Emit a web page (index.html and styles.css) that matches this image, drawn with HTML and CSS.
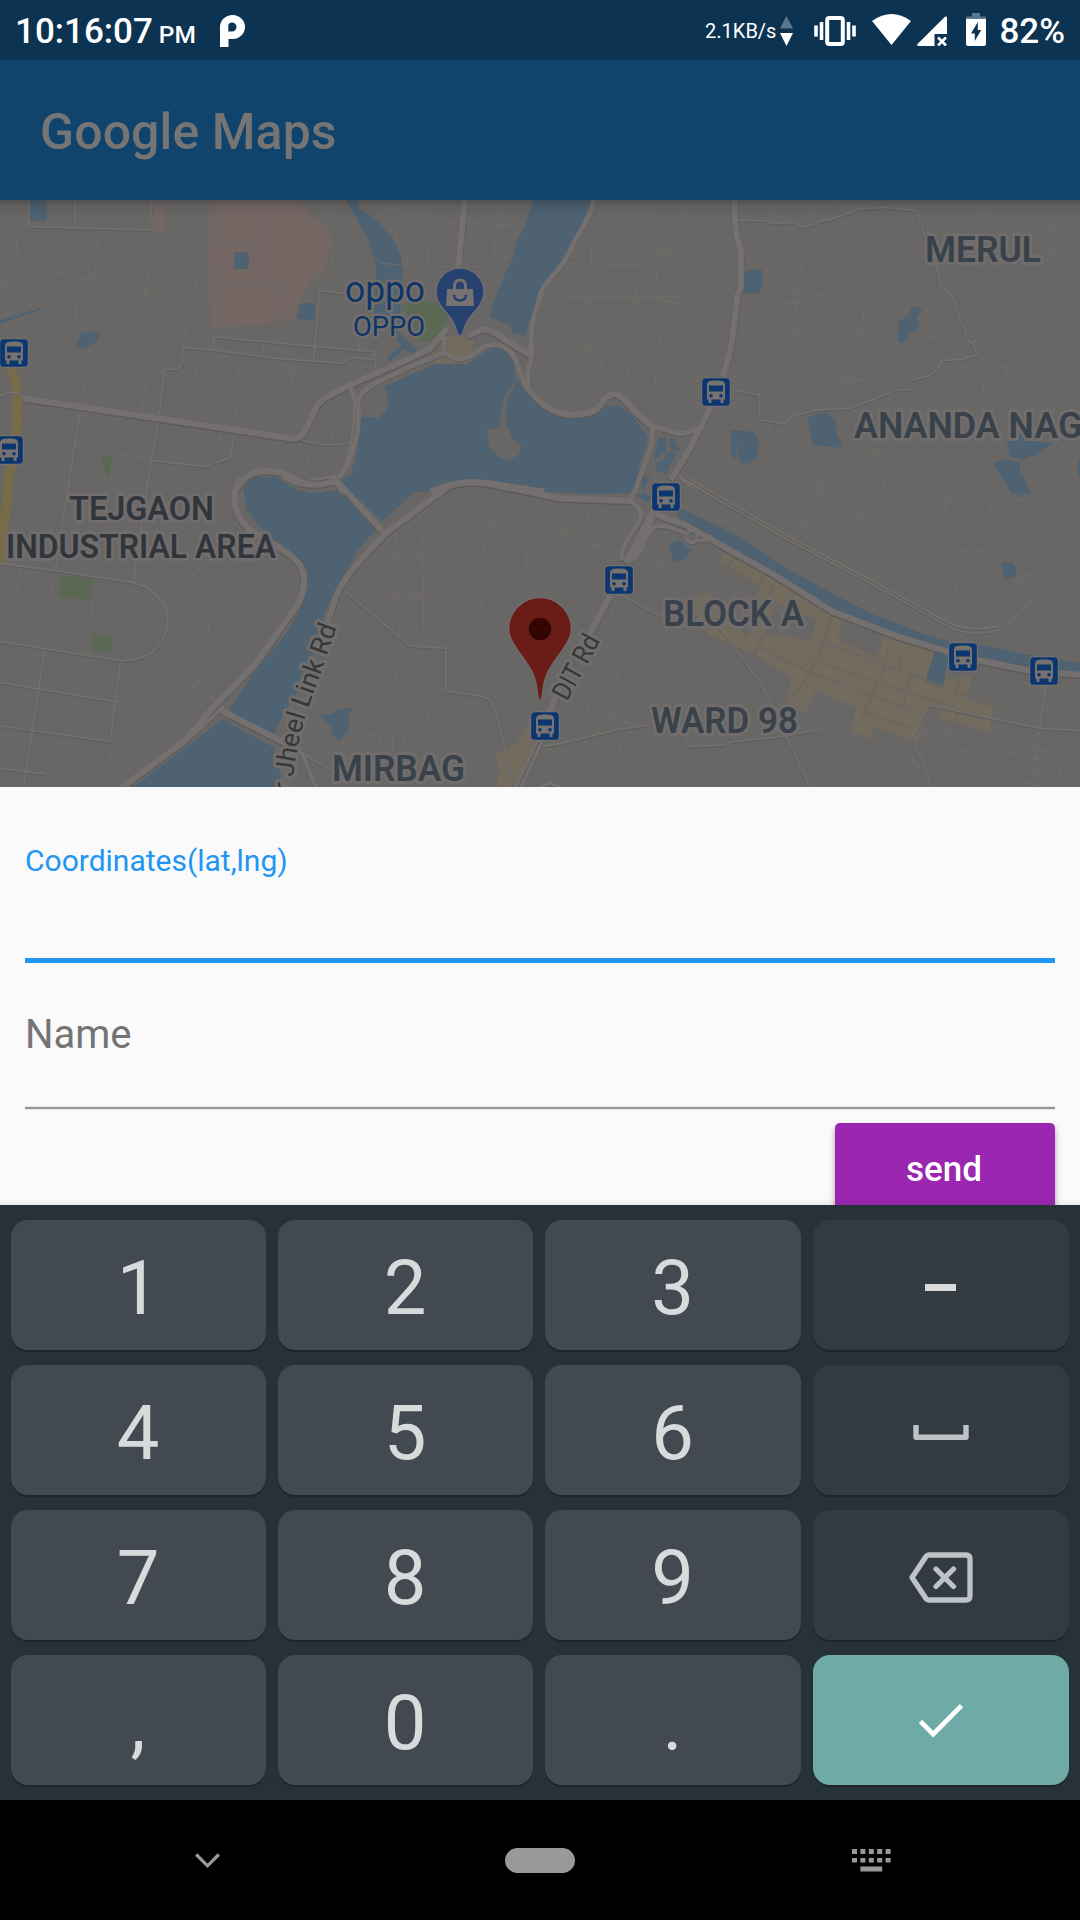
FILE: index.html
```html
<!DOCTYPE html>
<html lang="en">
<head>
<meta charset="utf-8">
<title>Google Maps</title>
<link rel="stylesheet" href="styles.css">
</head>
<body>
<div class="screen">
  <header class="status">
    <span class="clock">10:16:07</span><span class="ampm">PM</span>
    <svg class="i-p" width="25" height="32" viewBox="0 0 25 32"><path fill="#fff" fill-rule="evenodd" d="M0 32V12A12.5 12 0 1 1 12.500 24H8.500V32ZM12 7.500C9.500 7.500 8.300 9 8.300 11V16.500H12A4.500 4.500 0 0 0 12 7.500Z"/></svg>
    <span class="rate">2.1KB/s</span>
    <svg class="i-arrows" width="13" height="32" viewBox="0 0 13 32"><path fill="#5b768b" d="M6.500 1L13 13.500H0Z"/><path fill="#fff" d="M0 18H13L6.500 31Z"/></svg>
    <svg class="i-vib" width="42" height="30" viewBox="0 0 42 30"><rect x="13.200" y="2" width="15.600" height="26" rx="2" fill="none" stroke="#fff" stroke-width="4"/><path stroke="#fff" stroke-width="3.600" d="M7.500 6V24M34.500 6V24M2 9.500V20.500M40 9.500V20.500"/></svg>
    <svg class="i-wifi" width="39" height="31" viewBox="0 0 39 31"><path fill="#fff" d="M0 7Q19.500-7 39 7L19.500 31Z"/></svg>
    <svg class="i-sig" width="30" height="30" viewBox="0 0 30 30"><path fill="#fff" d="M30 1.500V18H17.500V30H1.500Q-.5 29.500.5 28L28 .8Q29.700-.2 30 1.500Z"/><path stroke="#fff" stroke-width="2.600" d="M21 21.500L29 29.500M29 21.500L21 29.500"/></svg>
    <svg class="i-bat" width="20" height="33" viewBox="0 0 20 33"><path fill="#5b768b" d="M6 0H14V3.500H20V6H0V3.500H6Z"/><path fill="#fff" fill-rule="evenodd" d="M0 6H20V31Q20 33 18 33H2Q0 33 0 31ZM11.800 9L5 20.500H8.800V28L15.200 17H11.800Z"/></svg>
    <span class="pct">82%</span>
  </header>
  <div class="appbar"><h1>Google Maps</h1></div>

  <main class="map">
    <svg width="1080" height="588" viewBox="0 0 1080 588">
      <defs>
        <g id="arterials">
          <g transform="translate(0,-10) scale(.34444,.33333)">
            <path d="M1352 0L1330 235M65 625L230 650 450 684 850 746C870 746 878 738 886 722L920 648C930 632 940 625 960 615L1020 583 1180 510 1245 478 1300 415M1355 437C1385 430 1390 418 1412 418 1440 425 1470 455 1505 474L1545 498"/>
            <path stroke-width="14" d="M1290 440L1288 490 1332 508C1380 505 1390 465 1430 465 1500 460 1500 540 1530 595L1580 650M1545 498C1535 400 1555 360 1575 310M1288 490L1190 530 1090 580C1060 598 1038 615 1040 650 1045 740 1025 800 985 865M1018 590L1033 645M1545 498L1532 540V600M1534 470L1545 498"/>
            <path d="M680 910C695 875 720 845 770 843 830 840 850 870 885 880 920 890 950 880 975 873L1000 910M1250 905C1330 870 1380 875 1420 880L1580 905"/>
            <path stroke-width="8" d="M985 865C1015 815 1025 750 1030 645M980 860C955 860 930 870 900 868"/>
          </g>
          <g transform="translate(540,-10) scale(.34444,.33333)">
            <path d="M562 0L568 125 583 185V295L573 315C560 440 555 490 531 560M495 650C470 710 430 790 380 870"/>
            <path d="M-5 630C35 665 60 674 100 674 180 672 175 635 195 620 215 605 230 615 245 630 275 665 300 690 325 710"/>
            <path stroke-width="14" d="M160 0C155 80 120 110 95 165 60 260 0 270-5 340M325 710C370 718 390 730 410 731 430 728 440 722 460 718M325 710C335 780 290 840 275 910"/>
          </g>
          <g transform="translate(0,280) scale(.34444,.33333)">
            <path d="M700-5C665 50 680 100 720 145 760 180 820 200 858 240 890 270 888 310 870 365L740 555 620 680 540 780 345 930"/>
            <path d="M1580 45L1420 12C1360 0 1310 10 1290 28L1120 160C1040 240 990 310 975 350L950 430M975 0L1115 160M640 690L875 815"/>
            <path stroke-width="10" d="M875 815L920 930M820-10C860 20 900 25 965 5M650 680L560 765"/>
          </g>
          <g transform="translate(540,280) scale(.34444,.33333)">
            <path d="M-5 42L50 55 262 63M205 345L140 470M60 620L20 710M250 250L330 90M330 100L420 135 500 180 680 285 850 395 1040 470 1190 517M1270 540L1420 572 1580 585"/>
            <path stroke-width="8" d="M-6 780L-72 925M8 780L-56 925"/>
            <path stroke-width="12" d="M262 63C300 90 298 110 285 130 240 200 230 215 240 240M262 63L290-5M420 160C330 115 315 145 300 195 285 235 275 240 255 245M270 235C290 180 325 140 330 100"/>
            <ellipse cx="440" cy="170" rx="16" ry="18" stroke-width="9"/><path stroke-width="9" d="M455 160L500 170M455 182L490 180M-5 925L30 910 70 925"/>
          </g>
        </g>
        <g id="streets">
          <g transform="translate(0,-10) scale(.34444,.33333)">
            <path d="M83 0V110L435 120 442 0M218 0V110M0 618L25 608 55 610M235 655L195 905M460 690L425 905M462 675L478 535 515 540 530 520V472L620 480V440L915 470 1085 485 1092 540M620 480L800 505 995 520 1018 503 1085 508M910 515L928 302 1000 310M1045 480V455M440 812L600 830 668 802 680 735M875 750C920 765 970 768 1010 760"/>
          </g>
          <g transform="translate(540,-10) scale(.34444,.33333)">
            <path d="M568 90L655 92 672 100 745 97 755 112C790 112 810 90 848 87L930 57 1000 52 1093 62 1120 145 1150 230 1165 290 1195 315 1245 455 1255 460 1270 495 1225 508 1165 512 1155 540 1120 560 1070 572V600H1040L900 655 800 660 727 680 715 702 638 690V615L560 600M400 855L480 905M410 870L455 905"/>
          </g>
          <g transform="translate(0,280) scale(.34444,.33333)">
            <path d="M202 0L160 272M430 0L387 305M0 250L160 272 387 308C440 320 487 370 487 420 487 490 440 545 350 542L0 485M130 510L68 925M350 545L320 785 0 738M332 665L0 608M1002 335L1190 498 1295 505V630C1350 650 1410 640 1425 665 1450 710 1460 800 1490 890M885 825L960 870M0 865L130 882"/>
          </g>
          <g transform="translate(540,280) scale(.34444,.33333)">
            <path d="M400-10L730 185 960 310 1170 430C1220 465 1280 465 1330 450M430-5L740 180 970 305 1180 425C1230 450 1280 450 1330 440M520 440L640 610 710 760 785 925M0 800C100 790 180 750 300 738H325M425 765V800L530 795 560 785 715 768 800 750M1130 925C1130 870 1090 820 1085 770L1128 675 1300 712 1450 745 1568 752M1470 620L1450 745M235 345L360 415"/>
          </g>
        </g>
        <g id="lanes">
          <g transform="translate(0,-10) scale(.34444,.33333)">
            <path d="M0 65L20 100 45 105 50 205M0 207L115 200 160 197 220 235 275 250M0 280L60 250 115 240 190 252 235 270 275 255 285 118M115 205V245L170 400M185 210L172 245M225 270L220 390M258 265L240 280 238 385M275 250L280 310 400 372 500 415V440M385 395L375 440 350 490 300 540 250 540 235 650M320 433L405 495V520M350 485L400 580M400 372L430 270 428 240 485 215 560 230 572 300M425 180L440 125 555 135M468 135V240M515 135L520 175M365 270H400L435 250M425 285V335L485 332 470 310H425M0 290C30 270 90 280 110 330L70 355 0 375M0 410L65 405 100 520 0 560M505 430L525 355 540 350M538 410L530 490M578 430L568 575M440 560L470 545M425 555L412 670M800 450L805 420 870 415M765 455V490M700 495L680 720M680 540L880 555M855 510L840 650M735 560L730 540M770 590L850 597M905 515V575M930 565L960 565 980 535M65 740L280 785 520 820M280 785L265 840M415 800L340 790M590 715L580 750M640 725V750M580 830L585 850 565 890M620 830L650 880M680 790L780 803M900 765L890 840 850 820M970 680L955 830M980 640V670M875 710L905 680M1105 30V55L1250 65 1240 230 1105 220M1125 115H1155L1150 155H1240M1188 180L1180 230M1055 50L1105 55M1245 95L1500 105 1503 75M1450 30L1435 200 1430 235M1430 195L1480 205M1240 230L1430 230M915 30C950 90 1030 130 1050 220V270M965 195L1040 165M965 195C970 300 960 280 980 330M935 80L975 55"/>
            <path d="M630 30L635 370 655 390M750 30L745 285M635 165H745M635 288L810 285 835 375 805 395" stroke="#6f6b6a"/>
          </g>
          <g transform="translate(540,-10) scale(.34444,.33333)">
            <path d="M180 30V155L190 190 240 160 225 135 265 125 385 145 375 210 255 225 75 220M180 80L255 65 330 70V30M328 70V125M345 140L340 210M310 150L305 190 430 190M430 30L400 115M455 135L500 140 505 180 570 190M255 225L575 265M90 272L150 275M150 170L142 490M0 300L70 320 410 320M280 280L275 380M340 225L335 325 420 345M470 295L570 305M145 348L320 355C370 450 340 450 335 550V600M320 370L270 490 240 600M0 490L70 470 170 470 180 550 120 585M175 500L330 550M0 515L180 625M0 600L15 615M250 590L380 605 460 620M165 350V420L195 425 230 465M400 437H495V495L540 505M380 520L375 615M410 545H445V610M500 30L508 70M630 140L637 200M590 207H700L1050 250 1045 290 1085 250M590 230L1040 280M700 265L1015 305M660 297L1040 345M580 320L990 370M575 345L980 400M570 380L960 430M570 410L945 460M565 445L880 515M565 475L940 575M615 515L910 575M660 548L860 605M560 557L850 635M760 210L715 620M990 210L980 370M940 360L935 460M880 515L875 575M720 335V400M800 350L795 405M880 490H930L950 520 985 530M880 580L950 570M680 50V95M895 70V130M780 75L835 35M945 55V95M860 35L930 60M1165 45L1110 55M1255 90L1290 65 1275 30M1290 65L1340 105 1445 155 1480 180 1568 265M1445 155L1490 105 1530 135M1340 215L1360 300 1400 370M1490 110L1480 140 1505 170 1470 190M1380 240L1420 290M1490 240L1495 270 1530 290V320M1105 440H1160M1125 325L1185 300M1130 355L1200 340M1230 385L1320 380 1330 345M1250 455L1330 456M1280 500L1290 540 1280 730M1290 540L1345 530 1435 505 1440 550M1390 525L1440 620 1510 630M1360 520L1350 570M1030 510V530L1090 525 1125 435M1170 440V510M945 525L955 575M1010 615L1020 665 1050 650M1080 565V640M1170 515L1195 560M500 685H540M445 790L495 815 490 850M665 700V815L610 865M610 865L540 830 530 800M715 700L780 785 820 820 815 900M880 790L985 785 1130 790 1220 730M1130 790L1165 850 1230 880M1030 690L1025 855 970 780 925 810M1110 850L1210 900M1490 630V740L1530 780 1520 870 1440 850M1530 780L1568 770M995 850L1000 905"/>
          </g>
          <g transform="translate(0,280) scale(.34444,.33333)">
            <path d="M0 380L40 385 60 265M55 290L150 300V350H125M0 420L40 424M210 420L225 410 268 415 345 432M268 360L355 382M268 360V415M405 395L385 540M425 310C440 270 450 260 460 230M470 355L565 280 640 215M520 240C560 270 605 350 605 420V470L625 490 730 455 755 420 735 395M490 325L470 350M480 375L490 400M465 500L540 560 620 660M490 570L530 620 570 605 740 540M735 490L750 440M660 275L720 290 740 325 830 285 860 265M770 310L830 360M800 290L820 320M365 665L395 720 530 670 570 605M335 665H430L500 620M425 720L455 825M390 780L425 855M325 690L360 700 365 725M325 785V800L315 920M180 890V925M235 905L290 908M600 0L565 30M640 95L700 150M665 120L650 95 680 70M700 30L710 60M1085 230L1250 237M1065 345H1270M1130 165L1065 340M1150 150L1160 490M1190 115V460M1228 130L1230 500M1270 345L1265 400 1305 420M1250 70L1300 95 1315 60 1340 80M1380 20L1390 70 1420 130 1400 230M1450 40L1420 130 1470 130 1475 90 1540 95 1535 145 1480 140M1290 165L1320 135 1365 130M1290 165L1310 200 1355 170V235L1400 240M1270 265L1355 265M1530 200V270M1480 300L1500 265M1005 445L1060 390 1095 415M1005 445L1065 480 1145 545 1150 600 1255 620 1295 630M1065 515H1035L1050 540 1075 565 1105 545M1040 500L1065 480M945 555L985 600 1040 640V660M1295 440L1355 435 1370 470 1400 460 1420 540 1440 600M1400 340L1390 430M1350 440L1320 480M1360 550L1400 535 1440 550M1230 620L1210 700M1190 620L1170 690M1160 610L1110 670M1250 625L1240 740 1170 760M1380 660L1375 730M1065 765H1105V810M1170 760L1180 830M1240 740L1330 740 1370 760M1140 760L1140 830M1335 640L1330 700M960 790L950 840M890 650L850 720"/>
          </g>
          <g transform="translate(540,280) scale(.34444,.33333)">
            <path d="M0 105L20 110 15 200 0 205M70 140L60 165 95 210 130 220 170 195 200 250M50 140C100 160 110 175 170 200M110 85L115 125M135 80L150 180M295 205L330 230 380 270 405 265 440 215M330 275L350 240 380 270M35 350H100V410M145 345L160 370 150 400M0 460L80 465 110 530M210 380L215 490 185 510M290 390L275 370M365 410L370 500M200 430L280 490 285 520M110 480L200 530 185 590M230 530L220 620 180 640M270 530L290 600 370 580 440 560M300 600L285 680M370 530L400 600 380 640 430 680M450 530L440 600 470 650M480 530L470 600 495 640M130 600L140 690 180 770M80 640L75 700M0 800L90 830 110 900M190 700L280 740M100 720L150 830 180 920M210 690L230 790 250 920M50 830L90 880M430 685H400L395 740M450 690L480 730M500 660L510 730M550 820H600L620 900M620 800L650 880M660 770L685 850 740 900M750 650L800 750 860 730M800 750L1000 770 1060 805M870 600L900 740M925 770L870 920M1050 770L1100 870M1020 870L1090 845 1120 880M1160 700L1200 800 1280 850M1100 740L1160 800 1270 820M1180 750L1568 835M1200 780L1568 865M1270 850L1568 895M1280 880L1480 925M1350 770L1320 925M1470 620L1425 925M1540 720L1500 920M1280 610L1568 665M1270 640L1568 695M1300 590L1568 640M455 80L550 135 700 215M610 0L540 130M780 110L705 220M800 0L810 35 830 10M730 180L780 105 850 30 870 0M590 45L780 150 990 270 1200 350M985 180L935 360M760 0L850 60 930 110 1170 160M935 110L905 155 945 90 935 10 880 0M1060 50L1120 130 1160 160 1035 235M1070 60L1110 15 1100 0M1180 0L1180 130 1220 210 1460 215M1180 130L1160 90 1200 50 1300 60 1320 110 1450 155 1460 215M1280 205V240L1300 320 1330 440M1220 210L1205 350 1170 430M1205 350L1330 370M1030 180L960 310M1110 200L1070 290M1325 0L1330 50 1450 70 1480 0M1340 55L1300 80M1520 0L1530 50 1520 200 1530 290 1440 380M1530 40L1568 45M1525 80L1568 85M1520 120L1568 125M1520 160L1568 165M1520 200L1568 205M1568 235L1480 240 1390 310 1430 370 1350 430M1568 255L1490 300 1350 440M1568 300L1410 430M1568 340L1400 475M1568 375L1430 490M1568 410L1470 505M1568 450L1510 515M1380 310L1480 240M1065 380L1035 430M930 360L1040 405M540 290L500 370M470 310L520 220M510 300L570 330 640 360 720 400 830 430M570 330L550 390M590 440L680 480 710 440"/>
          </g>
        </g>
        <symbol id="bus" viewBox="0 0 32 32">
          <rect x="1" y="1" width="30" height="30" rx="5" fill="#747070"/><rect x="2.200" y="2.200" width="27.600" height="27.600" rx="3.500" fill="#0b3670"/>
          <path fill="#77726f" d="M7 9C7 5.300 10 4.500 16 4.500S25 5.300 25 9V23.500H23.500V27H20.500V23.500H11.500V27H8.500V23.500H7Z"/>
          <rect x="9" y="9.500" width="14" height="6" fill="#0b3670"/><circle cx="11" cy="19.800" r="1.800" fill="#0b3670"/><circle cx="21" cy="19.800" r="1.800" fill="#0b3670"/>
        </symbol>
        <path id="jheel" d="M281 660L293 578Q298 537 308 509L337 427"/>
        <linearGradient id="shade" x1="0" y1="0" x2="0" y2="1"><stop offset="0" stop-opacity=".22"/><stop offset=".35" stop-opacity=".08"/><stop offset="1" stop-opacity="0"/></linearGradient>
      </defs>

      <g transform="translate(0,-10) scale(.34444,.33333)">
        <path class="pink" d="M607 0H845L900 70 955 120 967 165 945 215 950 250 920 255 885 300 855 385 740 408 612 410 603 200ZM448 48H478V128L440 130Z"/>
        <path class="water" d="M990 0H1030L1042 58 1068 70 1100 98 1146 155 1165 205 1170 265 1164 330 1160 430 1190 460 1215 485 1200 490 1170 478 1150 500 1128 515V495L1165 470 1140 430 1085 365 1092 270 1090 215 1070 150 1040 95ZM1575 0L1550 30 1520 115 1502 150 1487 210 1462 260 1440 320 1420 382 1480 405 1488 430 1525 437 1535 400 1575 300ZM1115 590L1265 521H1355L1440 468 1480 480 1492 520 1495 560 1530 610 1575 660V895L1420 872 1330 878 1250 905H1005L1035 790 1050 680 1100 684 1122 660 1128 635ZM700 905L715 885 740 868H790L870 905ZM87 20H133L136 92 87 93ZM680 190L688 186H718L725 205 719 237H680ZM0 390L118 353 122 358 0 401ZM220 470L235 430 255 426 292 431 275 460 245 473ZM862 385L868 345 880 340H905L915 347 914 387 885 390Z"/>
        <path class="green" d="M1165 345L1200 335 1265 338 1300 360 1292 410 1270 450 1220 455 1200 400ZM294 800L326 803 315 863 300 840Z"/>
        <path class="grey" d="M328 795L380 805 360 850 348 905H310Z"/>
        <path class="sand" d="M1295 437L1375 445 1372 485 1330 505 1295 490ZM1250 485L1290 490 1335 512 1390 490 1355 521H1265Z"/>
        <path class="land" d="M1413 720L1452 712C1450 640 1470 610 1490 580L1495 590C1475 610 1465 640 1472 710L1490 750 1515 770 1505 795 1475 812 1445 800 1420 770Z"/>
        <path class="gold" d="M30 530C50 580 53 640 52 680 45 760 25 850 20 910"/>
      </g>
      <g transform="translate(540,-10) scale(.34444,.33333)">
        <path class="water" d="M-10 0H158L148 40 115 115 60 215 15 275-10 310ZM-10 655L40 675 100 685 160 670 185 647H230L265 675 310 735 312 750 285 840 292 850 275 905H-10ZM595 250L605 240 645 238 648 275 635 312H595L590 285ZM1040 455V395L1070 375 1078 355 1095 348 1111 363 1090 380 1102 398 1090 425H1065L1070 440 1055 460ZM555 720L615 725 635 750 632 800 605 822 580 815 572 750 570 805 555 800ZM778 680L825 665 858 690V725L870 750 880 760 875 773 790 766 785 730ZM1355 750L1400 725 1430 752 1490 760 1450 785 1440 797 1415 800 1405 808 1365 800ZM1315 817L1365 808 1393 820 1395 855 1425 910H1370L1340 860ZM345 742L368 745 365 785 330 812ZM378 745L393 745 395 762 408 780 390 785 378 770ZM375 785L398 790 365 853 335 840 340 820 360 808ZM1568 805L1562 820V845L1568 865Z"/>
      </g>
      <g transform="translate(0,280) scale(.34444,.33333)">
        <path class="water" d="M725-10L705 40 715 90 770 160 855 222 890 270 893 320 870 390 835 455 745 570 662 690 795 772 803 740 860 640 905 540 945 395 975 330 1040 210 1090 150 985 30 900 40 860 28 800-10ZM645 718L800 805 798 840 815 880V930H375L530 810ZM1010-10H1250L1110 125 985 5ZM1400-10H1580V25ZM930 708L965 700 975 690 1022 683 1012 715 1016 745 985 783 965 765 960 740Z"/>
        <path class="green" d="M178 288L272 295 265 360 168 352ZM267 463L326 466 322 516 267 512Z"/>
        <path class="grey" d="M480 445L595 452 582 517 520 495Z"/>
        <path class="gold" d="M25-10L20 60 0 250"/>
        <path class="sand" d="M1440 925L1450 870 1438 825 1500 790 1540 720 1568 780 1490 925Z"/>
      </g>
      <g transform="translate(540,280) scale(.34444,.33333)">
        <path class="water" d="M-10-10H283L262 40 130 42-10 32ZM405 85L480 120 590 175 690 250 830 330 960 400 1040 432 1120 465 1190 485 1270 492 1420 525 1575 550V580L1420 562 1280 532 1180 515 1020 465 850 385 700 290 560 205 400 110ZM280 45L300 40 325 55 310 70ZM370 205L385 188 402 180 443 212 430 235 383 247V220ZM1338 255L1350 245 1375 250 1385 275 1375 292 1350 296ZM1340-10H1405L1420 40 1400 40 1392 55ZM290-10H320L300 30Z"/>
        <path class="sand" d="M535 218L690 305 850 398 880 420 865 480 990 540 978 530 1000 468 1150 520 1190 520 1180 600 1255 585 1240 658 1317 682 1305 755 1155 715 1165 680 1128 675 1100 785 970 740 960 777 900 750 920 685 800 630 770 700 715 670 730 595 620 520 490 465 450 400 455 345 490 335 520 380 600 470 640 400 625 350 640 315 518 245ZM0 785L15 795 0 812Z"/>
        <path class="land" d="M690 370L805 418 785 480 720 470 650 460Z"/>
        <path class="water" d="M1145 517L1188 528 1170 622 1118 605Z"/>
        <path class="lot" d="M565 232L545 265M650 285L625 350M685 305L650 370M740 335L720 385M850 398L825 480M655 460L620 525M670 530L720 550M640 500L780 575 960 645 1100 700M800 480L1000 555 1190 625 1300 670M780 535L980 610 1200 680M960 650L930 735M1010 500L1000 560 960 650M825 480L785 580 735 650M1080 580L1050 690M940 700L1080 745M1020 525L1050 535 1045 570M1220 590L1205 655M1220 690L1200 735"/>
      </g>

      <use href="#lanes" class="lanes"/>
      <use href="#streets" class="streets-edge" y="1"/>
      <use href="#streets" class="streets"/>
      <use href="#arterials" class="arterials-edge" y="1"/>
      <use href="#arterials" class="arterials"/>

      <g class="place">
        <text x="925" y="62" textLength="116" lengthAdjust="spacingAndGlyphs">MERUL</text>
        <text x="854" y="238" textLength="275" lengthAdjust="spacingAndGlyphs">ANANDA NAGAR</text>
        <text x="663" y="426" textLength="141" lengthAdjust="spacingAndGlyphs">BLOCK A</text>
        <text x="651" y="533" textLength="147" lengthAdjust="spacingAndGlyphs">WARD 98</text>
        <text x="332" y="581" textLength="133" lengthAdjust="spacingAndGlyphs">MIRBAG</text>
      </g>
      <g class="district">
        <text x="69" y="320" textLength="145" lengthAdjust="spacingAndGlyphs">TEJGAON</text>
        <text x="6" y="358" textLength="270" lengthAdjust="spacingAndGlyphs">INDUSTRIAL AREA</text>
      </g>
      <g class="road">
        <text transform="translate(567,502) rotate(-61.500)" textLength="70" lengthAdjust="spacingAndGlyphs">DIT Rd</text>
        <text text-anchor="end"><textPath href="#jheel" startOffset="100%">Hatir Jheel Link Rd</textPath></text>
      </g>
      <g class="shop">
        <text x="345" y="102" font-size="37" textLength="80" lengthAdjust="spacingAndGlyphs">oppo</text>
        <text x="353" y="136" font-size="28.500" textLength="72" lengthAdjust="spacingAndGlyphs">OPPO</text>
      </g>

      <g transform="translate(460,92)">
        <path fill="#26406f" stroke="#6d6c73" stroke-width="1.500" d="M0 44C-3 44-3 38-6 32-10 22-24 14-24 0A24 24 0 0 1 24 0C24 14 10 22 6 32 3 38 3 44 0 44Z"/>
        <path fill="#77726f" d="M-13-3H13L14 14H-14Z"/><path fill="none" stroke="#77726f" stroke-width="3" d="M-5.500-3V-6C-5.500-14 5.500-14 5.500-6V-3"/><path fill="none" stroke="#26406f" stroke-width="2.600" d="M-6 3Q-5.500 8.500 0 8.500T6 3"/>
      </g>
      <use href="#bus" x="-2" y="137" width="32" height="32"/>
      <use href="#bus" x="-7" y="234" width="32" height="32"/>
      <use href="#bus" x="700" y="176" width="32" height="32"/>
      <use href="#bus" x="650" y="281" width="32" height="32"/>
      <use href="#bus" x="603" y="364" width="32" height="32"/>
      <use href="#bus" x="947" y="441" width="32" height="32"/>
      <use href="#bus" x="1028" y="455" width="32" height="32"/>
      <use href="#bus" x="529" y="510" width="32" height="32"/>
      <path fill="#6a1d17" stroke="#716b69" stroke-width="1.500" d="M540 500.500C536.500 500.500 538.500 486 533 474 526 458 508.500 444 508.500 429A31.500 31.500 0 0 1 571.500 429C571.500 444 554 458 547 474 541.500 486 543.500 500.500 540 500.500Z"/><circle cx="540" cy="429" r="11.300" fill="#350504"/>
      <rect width="1080" height="18" fill="url(#shade)"/>
    </svg>
  </main>

  <section class="sheet">
    <label class="floating">Coordinates(lat,lng)</label>
    <div class="line active"></div>
    <label class="hint">Name</label>
    <div class="line"></div>
    <button class="send">send</button>
    <div class="kb-shadow"></div>
  </section>

  <section class="keyboard">
    <div class="key">1</div><div class="key">2</div><div class="key">3</div>
    <div class="key fn"><svg width="31" height="7"><rect width="31" height="7" fill="#d9dadc"/></svg></div>
    <div class="key">4</div><div class="key">5</div><div class="key">6</div>
    <div class="key fn"><svg width="56" height="15" viewBox="0 0 56 15"><path fill="none" stroke="#bfc2c6" stroke-width="5.400" stroke-linejoin="round" d="M3 0V12.300H53V0"/></svg></div>
    <div class="key">7</div><div class="key">8</div><div class="key">9</div>
    <div class="key fn"><svg width="64" height="51" viewBox="0 0 64 51"><g fill="none" stroke="#bfc2c6" stroke-width="5.300" stroke-linejoin="round" stroke-linecap="round"><path d="M3 25.500L17 4.500Q18 3 20 3H57Q61 3 61 7V44Q61 48 57 48H20Q18 48 17 46.500Z"/><path d="M27 17L44.500 34.500M44.500 17L27 34.500"/></g></svg></div>
    <div class="key">,</div><div class="key">0</div><div class="key">.</div>
    <div class="key go"><svg width="44" height="34" viewBox="0 0 44 34"><path fill="none" stroke="#fff" stroke-width="4.700" d="M1.500 17.500L14.200 30.200 42.500 1.700"/></svg></div>
  </section>

  <nav class="nav">
    <svg class="hide" width="25" height="16" viewBox="0 0 25 16"><path fill="none" stroke="#999" stroke-width="3.200" d="M1.200 1.500L12.500 12.800 23.800 1.500"/></svg>
    <div class="pill"></div>
    <svg class="switch" width="39" height="23" viewBox="0 0 39 23"><path fill="#999" d="M0 0H5V5H0ZM8.400 0H13.400V5H8.400ZM16.800 0H21.800V5H16.800ZM25.200 0H30.200V5H25.200ZM33.600 0H38.600V5H33.600ZM0 9H5V13.500H0ZM8.400 9H13.400V13.500H8.400ZM16.800 9H21.800V13.500H16.800ZM25.200 9H30.200V13.500H25.200ZM33.600 9H38.600V13.500H33.600ZM8.400 17.500H30.200V22.500H8.400Z"/></svg>
  </nav>
</div>
</body>
</html>
```
FILE: styles.css
```css
* { box-sizing: border-box; }
body { margin: 0; font-family: Roboto, "Liberation Sans", sans-serif; }
.screen { width: 1080px; height: 1920px; display: flex; flex-direction: column; overflow: hidden; background: #000; }
svg { display: block; flex: none; }

.status { height: 60px; background: #0c3351; color: #fff; display: flex; align-items: center; padding: 1px 15px 0 15px; white-space: nowrap; }
.clock { font-size: 35px; font-weight: 500; line-height: 60px; padding-top: 2px; }
.ampm { font-size: 24.5px; font-weight: 500; line-height: 60px; margin: 8px 0 0 6px; }
.i-p { margin-left: 24px; }
.rate { font-size: 20px; margin-left: auto; }
.i-arrows { margin-left: 4px; }
.i-vib { margin-left: 21px; }
.i-wifi { margin: -3px 0 0 16px; }
.i-sig { margin-left: 6px; }
.i-bat { margin: -2px 0 0 19px; }
.pct { font-size: 35px; font-weight: 500; line-height: 60px; padding-top: 2px; margin-left: 13px; }

.appbar { height: 140px; background: #10446d; display: flex; align-items: center; padding: 4px 40px 0; }
.appbar h1 { margin: 0; font-size: 50px; font-weight: 500; color: #757575; line-height: 60px; letter-spacing: .1px; }

.map { height: 587px; background: #686765; overflow: hidden; }
.water { fill: #4e6272; }
.land { fill: #686765; }
.pink { fill: #746663; }
.green { fill: #5a6854; }
.grey { fill: #66686a; }
.sand { fill: #736b5d; }
.lot { fill: none; stroke: #696663; stroke-width: 5; }
.gold { fill: none; stroke: #786b47; stroke-width: 27; }
.lanes { fill: none; stroke: #6e6b69; stroke-width: 4; }
.streets-edge { fill: none; stroke: #605f5d; stroke-width: 7; }
.streets { fill: none; stroke: #73706e; stroke-width: 5; }
.arterials-edge { fill: none; stroke: #5c5b5a; stroke-width: 21; }
.arterials { fill: none; stroke: #757070; stroke-width: 18; }
.map text { paint-order: stroke; stroke: #716d6c; stroke-width: 6px; stroke-linejoin: round; }
.place text { font-size: 36.5px; font-weight: 600; fill: #39414b; }
.district text { font-size: 34px; font-weight: 600; fill: #30363c; }
.road text { font-size: 26.5px; fill: #343839; }
.shop text { fill: #0e3568; stroke-width: 5px; }

.sheet { position: relative; height: 418px; background: #fafafa; padding: 56px 25px 0; overflow: hidden; display: flex; flex-direction: column; }
.floating { font-size: 30px; line-height: 36px; color: #2196f3; }
.line { height: 4px; flex: none; background: #999; border: solid #e4e4e4; border-width: 1px 0; margin-top: 47px; }
.line.active { height: 5px; border: 0; background: #2196f3; margin-top: 79px; }
.hint { font-size: 40px; line-height: 48px; color: #747474; margin-top: 48px; }
.send { align-self: flex-end; flex: none; width: 220px; height: 93px; margin-top: 13px; padding: 0 2px 0 0; border: 0; border-radius: 5px; background: #9b26b0; color: #fff; font: 500 35px Roboto, "Liberation Sans", sans-serif; box-shadow: 0 4px 6px rgba(0,0,0,.35); }
.kb-shadow { position: absolute; left: 0; right: 0; bottom: 0; height: 7px; background: linear-gradient(transparent, rgba(0,0,0,.06)); }

.keyboard { height: 595px; background: #273238; padding: 15px 11px; display: grid; grid-template-columns: 255px 255px 256px 256px; grid-auto-rows: 130px; gap: 15px 12px; }
.key { display: flex; align-items: center; justify-content: center; border-radius: 17px; background: #424950; color: #d9dadc; font-size: 76px; line-height: 90px; padding: 6px 1px 0 0; box-shadow: 0 2px 0 #1d262c; }
.key.fn { background: #313b41; padding-top: 4px; }
.key.go { background: #6eaba7; padding: 2px 0 0; }

.nav { height: 120px; padding: 0 42px; display: grid; grid-template-columns: repeat(3, 1fr); align-items: center; justify-items: center; }
.pill { width: 70px; height: 25px; border-radius: 13px; background: #999; }
.hide { margin: 2px 1px 0 0; }
.switch { margin-right: 2px; }
```
